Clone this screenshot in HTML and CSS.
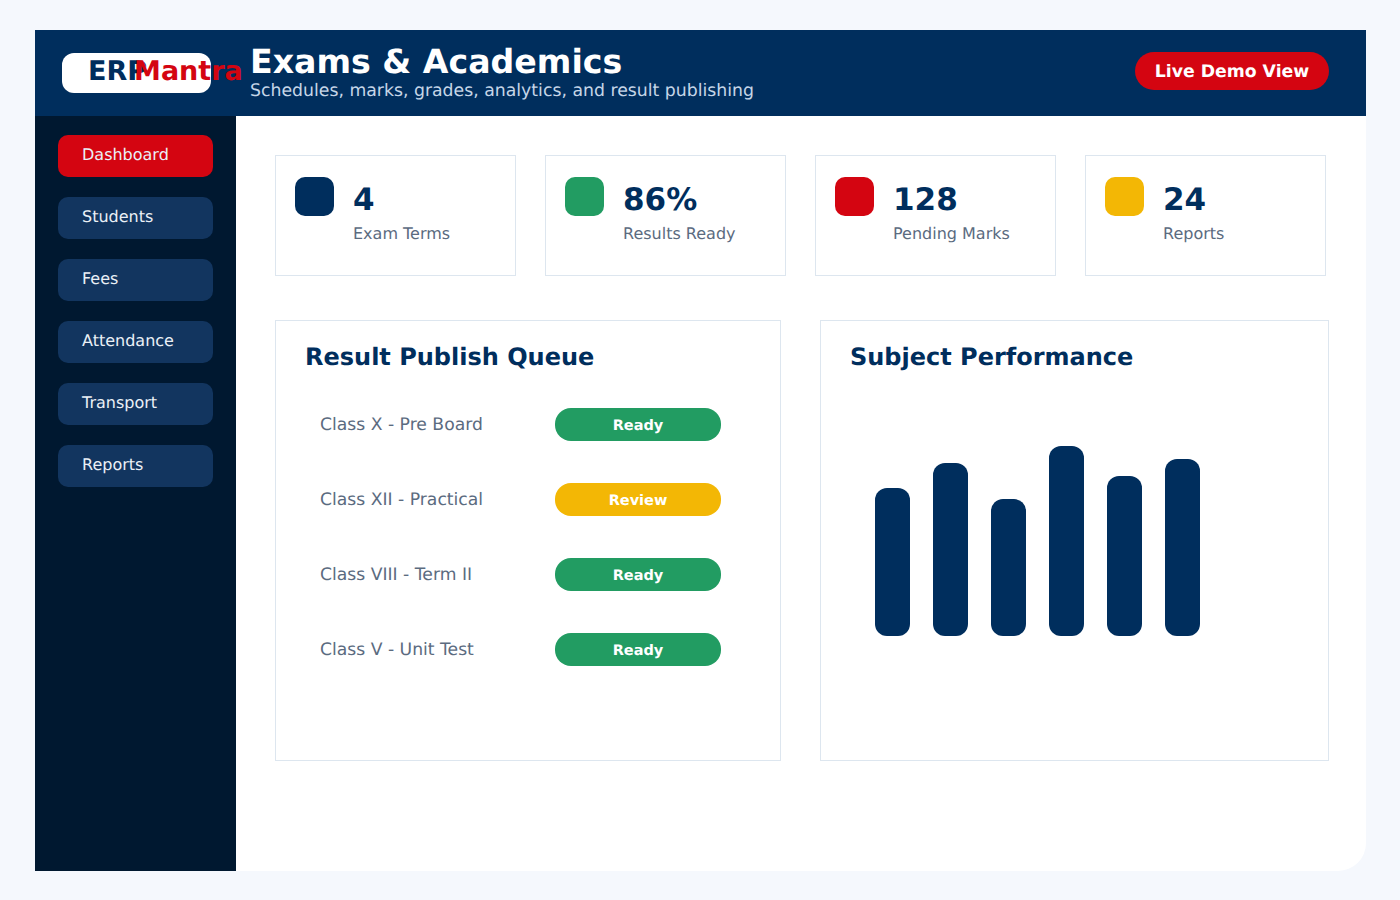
FILE: index.html
```html
<!DOCTYPE html>
<html lang="en">
<head>
    <meta charset="UTF-8">
    <meta name="viewport" content="width=device-width, initial-scale=1.0">
    <title>Exams &amp; Academics</title>
    <link rel="stylesheet" href="styles.css">
</head>
<body>
    <div class="app">
        <header class="topbar">
            <div class="logo"><span class="logo-erp">ERP</span><span class="logo-mantra">Mantra</span></div>
            <div class="heading">
                <h1>Exams &amp; Academics</h1>
                <p>Schedules, marks, grades, analytics, and result publishing</p>
            </div>
            <div class="demo-btn">Live Demo View</div>
        </header>
        <div class="layout">
            <nav class="sidebar">
                <a class="nav-item active">Dashboard</a>
                <a class="nav-item">Students</a>
                <a class="nav-item">Fees</a>
                <a class="nav-item">Attendance</a>
                <a class="nav-item">Transport</a>
                <a class="nav-item">Reports</a>
            </nav>
            <main class="content">
                <section class="stats">
                    <div class="stat-card">
                        <div class="stat-icon navy"></div>
                        <div>
                            <div class="stat-value">4</div>
                            <div class="stat-label">Exam Terms</div>
                        </div>
                    </div>
                    <div class="stat-card">
                        <div class="stat-icon green"></div>
                        <div>
                            <div class="stat-value">86%</div>
                            <div class="stat-label">Results Ready</div>
                        </div>
                    </div>
                    <div class="stat-card">
                        <div class="stat-icon red"></div>
                        <div>
                            <div class="stat-value">128</div>
                            <div class="stat-label">Pending Marks</div>
                        </div>
                    </div>
                    <div class="stat-card">
                        <div class="stat-icon yellow"></div>
                        <div>
                            <div class="stat-value">24</div>
                            <div class="stat-label">Reports</div>
                        </div>
                    </div>
                </section>
                <section class="panels">
                    <div class="panel">
                        <h2>Result Publish Queue</h2>
                        <div class="queue">
                            <div class="queue-row">
                                <span class="queue-name">Class X - Pre Board</span>
                                <span class="pill green">Ready</span>
                            </div>
                            <div class="queue-row">
                                <span class="queue-name">Class XII - Practical</span>
                                <span class="pill yellow">Review</span>
                            </div>
                            <div class="queue-row">
                                <span class="queue-name">Class VIII - Term II</span>
                                <span class="pill green">Ready</span>
                            </div>
                            <div class="queue-row">
                                <span class="queue-name">Class V - Unit Test</span>
                                <span class="pill green">Ready</span>
                            </div>
                        </div>
                    </div>
                    <div class="panel">
                        <h2>Subject Performance</h2>
                        <div class="chart">
                            <div class="bar" style="height: 148px"></div>
                            <div class="bar" style="height: 173px"></div>
                            <div class="bar" style="height: 137px"></div>
                            <div class="bar" style="height: 190px"></div>
                            <div class="bar" style="height: 160px"></div>
                            <div class="bar" style="height: 177px"></div>
                        </div>
                    </div>
                </section>
            </main>
        </div>
    </div>
</body>
</html>
```

FILE: styles.css
```css
* {
    box-sizing: border-box;
}
body {
    margin: 0;
    padding: 30px 34px 29px 35px;
    background-color: #f5f8fd;
    font-family: "DejaVu Sans", sans-serif;
    text-rendering: geometricPrecision;
}
.app {
    height: 841px;
    display: flex;
    flex-direction: column;
    background: white;
    border-bottom-right-radius: 28px;
    overflow: hidden;
}
.topbar {
    height: 86px;
    flex: none;
    display: flex;
    align-items: center;
    padding: 0 37px 0 27px;
    background-color: #002e5d;
}
.logo {
    width: 149px;
    height: 40px;
    flex: none;
    display: flex;
    align-items: center;
    padding: 0 0 3px 26px;
    margin-right: 39px;
    background: white;
    border-radius: 12px;
    font-size: 27px;
    font-weight: bold;
    white-space: nowrap;
}
.logo-erp {
    color: #002e5d;
}
.logo-mantra {
    margin-left: -13px;
    color: #d40511;
}
.heading {
    flex: 1;
    margin-bottom: 2px;
}
.heading h1 {
    margin: 0;
    font-size: 33.2px;
    line-height: 38px;
    color: white;
}
.heading p {
    margin: 0;
    font-size: 17.3px;
    line-height: 20px;
    color: #c6d6e8;
}
.demo-btn {
    width: 194px;
    height: 38px;
    display: flex;
    align-items: center;
    justify-content: center;
    margin-bottom: 4px;
    padding-top: 2px;
    background-color: #d40511;
    border-radius: 19px;
    font-size: 17.3px;
    font-weight: bold;
    color: white;
}
.layout {
    flex: 1;
    display: flex;
    min-height: 0;
}
.sidebar {
    width: 201px;
    flex: none;
    display: flex;
    flex-direction: column;
    gap: 20px;
    padding: 19px 23px;
    background-color: #001830;
}
.nav-item {
    height: 42px;
    padding: 10px 24px 0;
    background-color: #12355f;
    border-radius: 10px;
    font-size: 16px;
    line-height: 20px;
    color: #eaf0f6;
}
.nav-item.active {
    background-color: #d40511;
}
.content {
    flex: 1;
    padding: 39px 40px 0 39px;
}
.stats {
    display: grid;
    grid-template-columns: repeat(4, 241px);
    gap: 29px;
}
.stat-card {
    height: 121px;
    display: flex;
    gap: 19px;
    padding: 21px 19px;
    border: 1px solid #dde6ef;
}
.stat-icon {
    width: 39px;
    height: 39px;
    flex: none;
    border-radius: 10px;
}
.stat-value {
    margin-top: 4px;
    font-size: 31px;
    line-height: 38px;
    font-weight: bold;
    color: #002e5d;
}
.stat-label {
    margin-top: 5px;
    font-size: 16px;
    line-height: 20px;
    color: #5b6b7f;
}
.navy {
    background-color: #002e5d;
}
.green {
    background-color: #229c62;
}
.red {
    background-color: #d40511;
}
.yellow {
    background-color: #f3b705;
}
.panels {
    display: grid;
    grid-template-columns: 506px 509px;
    gap: 39px;
    margin-top: 44px;
}
.panel {
    height: 441px;
    padding: 22px 29px;
    border: 1px solid #dde6ef;
}
.panel h2 {
    margin: 0;
    font-size: 24px;
    line-height: 28px;
    color: #002e5d;
}
.queue {
    display: flex;
    flex-direction: column;
    gap: 42px;
    margin-top: 37px;
    padding-left: 15px;
}
.queue-row {
    display: flex;
    align-items: center;
}
.queue-name {
    width: 235px;
    font-size: 17.2px;
    color: #5b6b7f;
}
.pill {
    width: 166px;
    height: 33px;
    display: flex;
    align-items: center;
    justify-content: center;
    padding-top: 2px;
    border-radius: 16px;
    font-size: 14.5px;
    font-weight: bold;
    color: white;
}
.chart {
    height: 190px;
    display: flex;
    align-items: flex-end;
    gap: 23px;
    margin-top: 75px;
    padding-left: 25px;
}
.bar {
    width: 35px;
    background-color: #002e5d;
    border-radius: 12px;
}
```
